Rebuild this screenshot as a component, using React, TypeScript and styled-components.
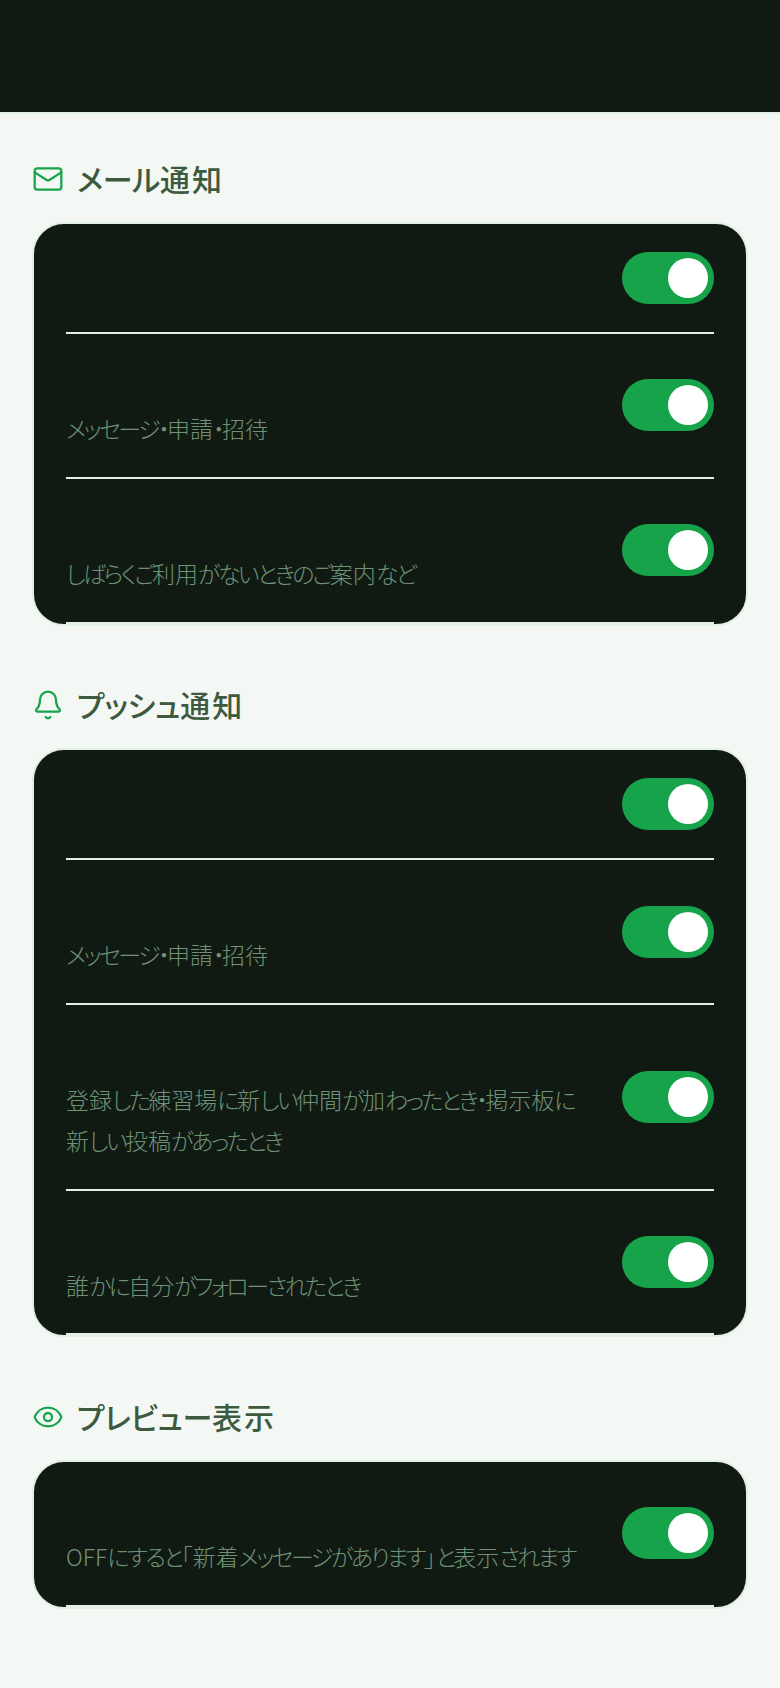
import styled, { createGlobalStyle } from "styled-components";
import { Mail, Bell, Eye } from "lucide-react";
import type { ReactNode } from "react";

const GlobalStyle = createGlobalStyle`
  html, body {
    margin: 0;
    padding: 0;
    background: #f4f8f5;
  }
  * {
    box-sizing: border-box;
  }
  body {
    font-family: "Noto Sans CJK JP", "Noto Sans", sans-serif;
    font-feature-settings: "palt";
  }
`;

// kana runs are set tighter than kanji, like the narrow-kana face in the design
const Kana = styled.span`
  letter-spacing: -0.11em;
`;

const Page = styled.div`
  min-height: 1688px;
  background: #f4f8f5;
`;

const Header = styled.header`
  height: 114px;
  background: #101a13;
  border-bottom: 2px solid #e2efe6;
`;

const Main = styled.main`
  padding: 40px 32px 0;
  display: flex;
  flex-direction: column;
  gap: 54.6px;
`;

const Section = styled.section`
  display: flex;
  flex-direction: column;
  gap: 20px;
`;

const Heading = styled.h2`
  display: flex;
  align-items: center;
  gap: 13px;
  margin: 0;
  height: 48px;
  font-size: 30px;
  font-weight: 500;
  letter-spacing: 2px;
  color: #3d5a3f;
  svg {
    color: #16a34a;
    flex: none;
    margin-top: 2px;
  }
  ${Kana} {
    letter-spacing: -0.01em;
  }
`;

const Card = styled.div`
  background: #101a13;
  border: 2px solid #e2efe6;
  border-radius: 32px;
  padding: 0 32px;
`;

const Row = styled.div`
  display: flex;
  align-items: center;
  justify-content: space-between;
  gap: 32px;
  padding: 28px 0;
  border-bottom: 2px solid #e2efe6;
`;

const RowText = styled.div`
  flex: 1;
  min-width: 0;
`;

const Title = styled.div`
  height: 46px;
`;

const Desc = styled.p`
  margin: 0;
  font-size: 23px;
  font-weight: 300;
  line-height: 40.8px;
  white-space: pre-line;
  color: #6f9276;
`;

const Toggle = styled.span`
  flex: none;
  width: 92px;
  height: 52px;
  padding: 6px;
  border-radius: 26px;
  background: #16a34a;
  display: flex;
  justify-content: flex-end;
`;

const Knob = styled.span`
  width: 40px;
  height: 40px;
  border-radius: 50%;
  background: #fff;
`;

const withKana = (text: string) =>
  text.split(/([\u3040-\u30ff]+)/).map((part, i) => (i % 2 ? <Kana key={i}>{part}</Kana> : part));

const Setting = ({ desc }: { desc?: string }) => (
  <Row>
    {desc ? (
      <RowText>
        <Title />
        <Desc>{withKana(desc)}</Desc>
      </RowText>
    ) : (
      <RowText />
    )}
    <Toggle>
      <Knob />
    </Toggle>
  </Row>
);

const Group = ({ icon, title, children }: { icon: ReactNode; title: string; children: ReactNode }) => (
  <Section>
    <Heading>
      {icon}
      <span>{withKana(title)}</span>
    </Heading>
    <Card>{children}</Card>
  </Section>
);

export default function App() {
  return (
    <Page>
      <GlobalStyle />
      <Header />
      <Main>
        <Group icon={<Mail size={32} strokeWidth={1.7} />} title="メール通知">
          <Setting />
          <Setting desc="メッセージ・申請・招待" />
          <Setting desc="しばらくご利用がないときのご案内など" />
        </Group>
        <Group icon={<Bell size={32} strokeWidth={1.7} />} title="プッシュ通知">
          <Setting />
          <Setting desc="メッセージ・申請・招待" />
          <Setting desc={"登録した練習場に新しい仲間が加わったとき・掲示板に\n新しい投稿があったとき"} />
          <Setting desc="誰かに自分がフォローされたとき" />
        </Group>
        <Group icon={<Eye size={32} strokeWidth={1.7} />} title="プレビュー表示">
          <Setting desc="OFFにすると「新着メッセージがあります」と表示されます" />
        </Group>
      </Main>
    </Page>
  );
}
